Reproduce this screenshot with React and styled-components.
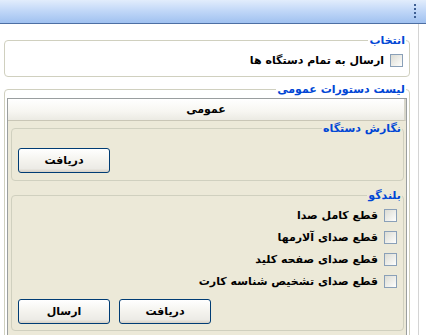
import React from "react";
import styled, { createGlobalStyle } from "styled-components";

const Global = createGlobalStyle`
  html, body { margin: 0; padding: 0; background: #ffffff; overflow: hidden; }
  body { font-family: "DejaVu Sans", "Noto Sans", sans-serif; }
  * { box-sizing: border-box; }
`;

const Page = styled.div`
  width: 426px;
  height: 335px;
  display: flex;
  flex-direction: column;
  overflow: hidden;
  background: #ffffff;
`;

const Header = styled.div`
  height: 24px;
  flex: none;
  display: flex;
  justify-content: flex-end;
  align-items: flex-start;
  padding: 4px 10px 0 0;
  background: linear-gradient(#e2edfc, #bfd6f7 50%, #a0c1f0);
  border-bottom: 1px solid #4d6fa3;
`;

const Grip = styled.span`
  width: 2px;
  height: 14px;
  background: repeating-linear-gradient(#3e5f93 0 2px, transparent 2px 4px);
`;

const Body = styled.div`
  flex: 1;
  display: flex;
  min-height: 0;
`;

const Content = styled.div`
  width: 419px;
  flex: none;
  border-right: 1px solid #d4d4d4;
  padding: 10px 8px 0 0;
  direction: rtl;
`;

const Group = styled.fieldset`
  width: ${(p) => p.$w}px;
  margin: ${(p) => p.$mt || 0}px 0 0 0;
  padding: 0 ${(p) => p.$pr}px ${(p) => p.$pb}px ${(p) => p.$pl}px;
  border: 1px solid #d0d0bf;
  border-radius: 4px;
  min-width: 0;
`;

const Legend = styled.legend`
  padding: 0 1px;
  margin-inline-start: ${(p) => p.$ms}px;
  color: #0046d5;
  font-size: 11px;
  line-height: 13px;
  font-weight: bold;
`;

const Row = styled.label`
  display: flex;
  align-items: center;
  gap: 6px;
  height: ${(p) => p.$h}px;
  margin-top: ${(p) => p.$mt || 0}px;
  font-size: 11px;
  font-weight: bold;
  color: #000;
  white-space: nowrap;
`;

const Box = styled.span`
  width: 13px;
  height: 13px;
  flex: none;
  border: 1px solid #8aa0b8;
  background: linear-gradient(135deg, #dcdcd4, #f7f7f4 80%, #ffffff);
`;

const TabPanel = styled.div`
  margin-top: 2px;
  border: 1px solid #9a9e9f;
  border-bottom: none;
  background: #ece9d8;
`;

const TabHead = styled.div`
  height: 22px;
  display: flex;
  align-items: center;
  justify-content: center;
  font-size: 11px;
  font-weight: bold;
  background: linear-gradient(#ffffff, #f7f6f1 60%, #ebeae3);
  border-bottom: 1px solid #c9c6b6;
  border-right: 2px solid #d8d6ca;
`;

const TabBody = styled.div`
  padding: 1px 2px 12px 3px;
`;

const Buttons = styled.div`
  display: flex;
  justify-content: flex-end;
  gap: 9px;
  margin-top: ${(p) => p.$mt}px;
`;

const Button = styled.button`
  width: 92px;
  height: 25px;
  padding: 0;
  border: 1px solid #003c74;
  border-radius: 3px;
  background: linear-gradient(#ffffff, #f4f3ee 50%, #ecebe6 85%, #d6d0c5);
  font-family: "DejaVu Sans", sans-serif;
  font-size: 11px;
  font-weight: bold;
  color: #000;
  direction: rtl;
`;

const Checks = styled.div`
  display: flex;
  flex-direction: column;
  margin-top: 2px;
`;

const speaker = [
  "قطع کامل صدا",
  "قطع صدای آلارمها",
  "قطع صدای صفحه کلید",
  "قطع صدای تشخیص شناسه کارت",
];

export default function App() {
  return (
    <Page>
      <Global />
      <Header>
        <Grip />
      </Header>
      <Body>
        <Content>
          <Group $w={406} $pr={6} $pl={6} $pb={9}>
            <Legend $ms={-3}>انتخاب</Legend>
            <Row $h={14} $mt={6}>
              <Box />
              ارسال به تمام دستگاه ها
            </Row>
          </Group>
          <Group $w={406} $mt={6} $pr={2} $pl={2} $pb={0}>
            <Legend $ms={1}>لیست دستورات عمومی</Legend>
            <TabPanel>
              <TabHead>عمومی</TabHead>
              <TabBody>
                <Group $w={393} $pr={6} $pl={6} $pb={7}>
                  <Legend $ms={-5}>نگارش دستگاه</Legend>
                  <Buttons $mt={13}>
                    <Button>دریافت</Button>
                  </Buttons>
                </Group>
                <Group $w={393} $mt={8} $pr={6} $pl={6} $pb={6}>
                  <Legend $ms={-5}>بلندگو</Legend>
                  <Checks>
                    {speaker.map((s) => (
                      <Row key={s} $h={22}>
                        <Box />
                        {s}
                      </Row>
                    ))}
                  </Checks>
                  <Buttons $mt={7}>
                    <Button>دریافت</Button>
                    <Button>ارسال</Button>
                  </Buttons>
                </Group>
              </TabBody>
            </TabPanel>
          </Group>
        </Content>
      </Body>
    </Page>
  );
}
